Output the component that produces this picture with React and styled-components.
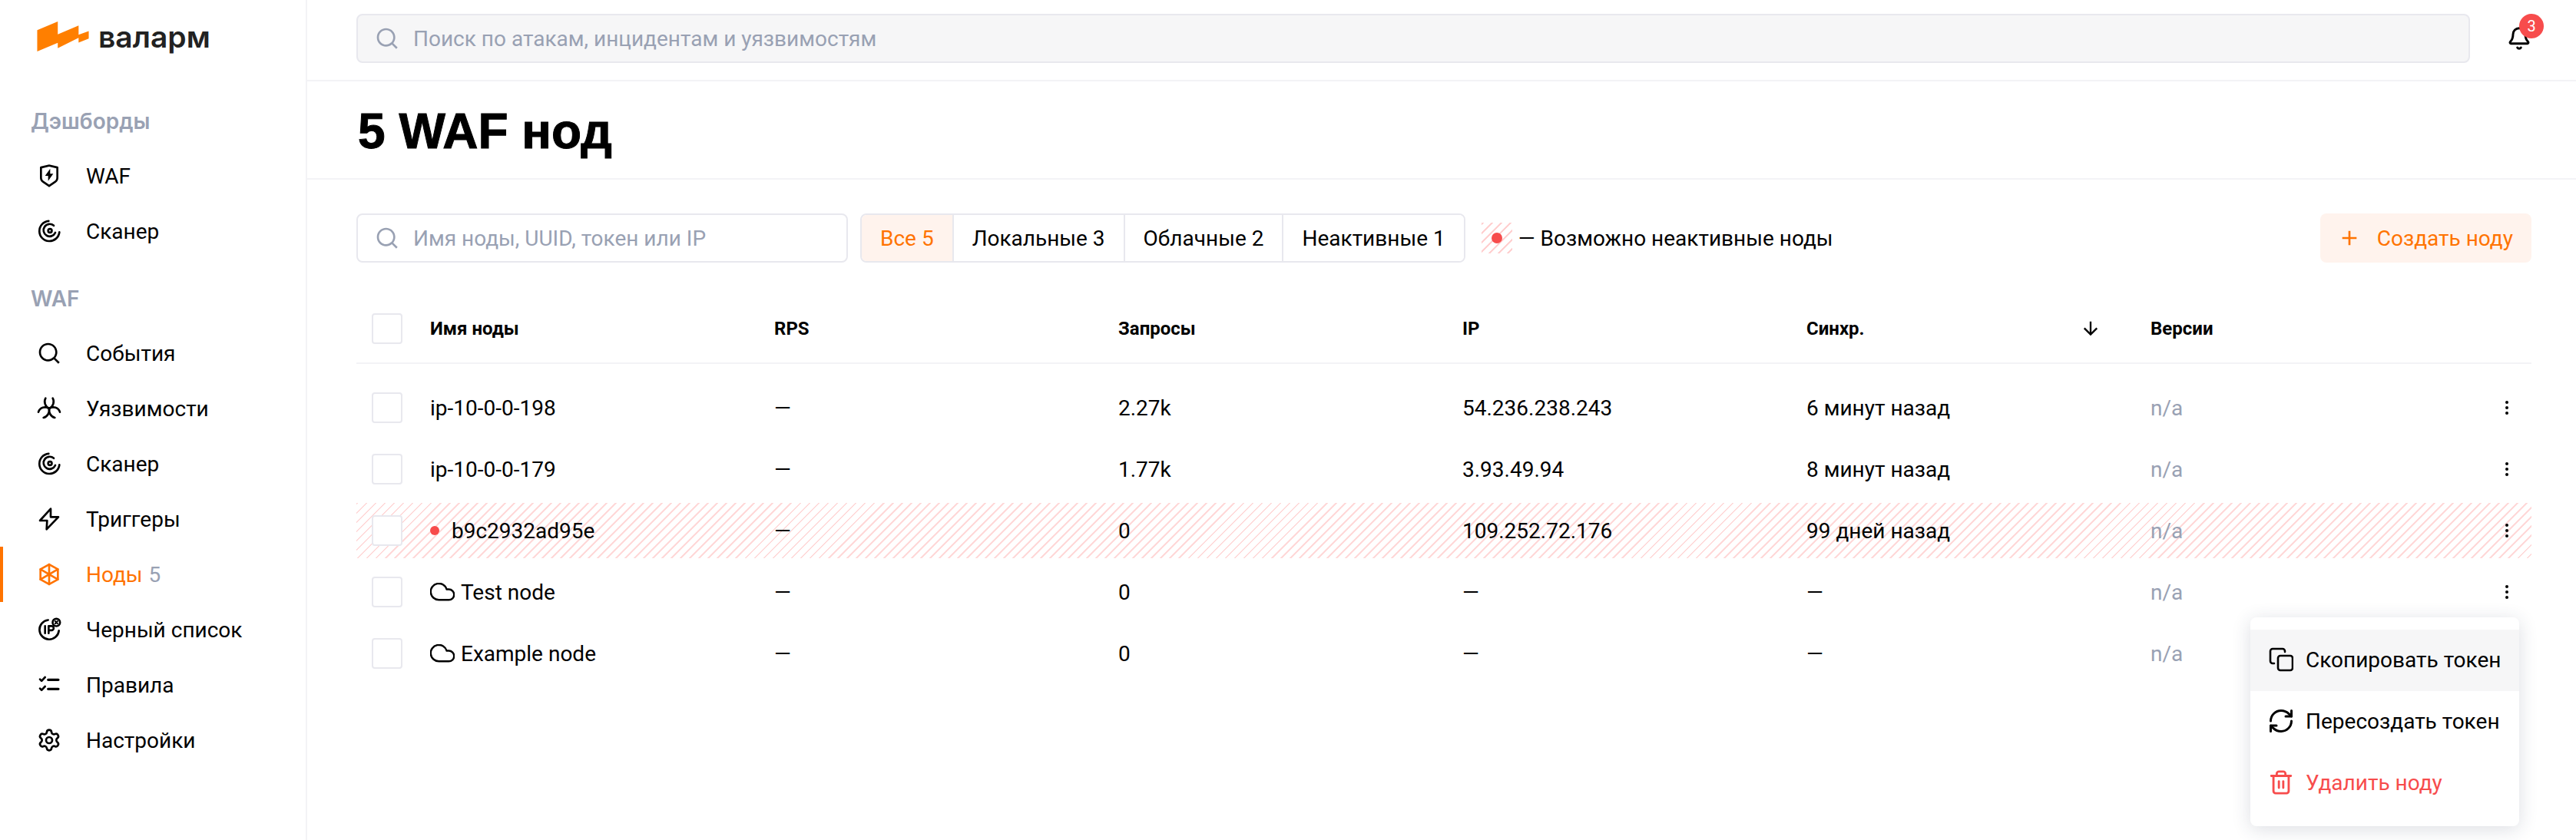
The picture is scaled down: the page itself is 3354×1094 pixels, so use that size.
import React from 'react'
import styled, { createGlobalStyle } from 'styled-components'
import { RiSearchLine, RiShieldFlashLine, RiAddLine, RiArrowDownLine } from 'react-icons/ri'
import { Settings, Bell, RefreshCw, Trash2 } from 'lucide-react'

const orange = '#ff7300'
const grey = '#99a1b3'
const line = '#e8e8ee'
const hatch = 'repeating-linear-gradient(135deg, #ffd9d9 0 2px, #fff 2px 8.5px)'

const GlobalStyle = createGlobalStyle`
  html, body {
    margin: 0;
    padding: 0;
    background: #fff;
    color: #000;
    font-family: 'Roboto', 'Liberation Sans', sans-serif;
    font-size: 28px;
  }
  * { box-sizing: border-box; }
`

const Page = styled.div`
  display: flex;
  width: 3354px;
  height: 1094px;
  overflow: hidden;
`

const Sidebar = styled.aside`
  flex: 0 0 400px;
  border-right: 2px solid #f3f3f6;
`

const LogoBox = styled.div`
  display: flex;
  align-items: center;
  gap: 12px;
  height: 106px;
  padding: 0 0 12px 48px;
`

const LogoText = styled.span`
  font-family: 'Inter', sans-serif;
  font-weight: 600;
  font-size: 39px;
  line-height: 1;
  color: #222;
`

const Section = styled.div`
  margin-top: 32px;
`

const SectionLabel = styled.div`
  height: 40px;
  margin-bottom: 15px;
  padding-left: 40px;
  font-family: 'Inter', sans-serif;
  font-weight: 600;
  font-size: 28px;
  line-height: 40px;
  color: ${grey};
`

const NavItem = styled.div`
  display: flex;
  align-items: center;
  gap: 32px;
  height: 72px;
  padding-left: ${p => (p.$active ? 44 : 48)}px;
  border-left: ${p => (p.$active ? `4px solid ${orange}` : 'none')};
  color: ${p => (p.$active ? orange : '#000')};
  svg { flex: 0 0 32px; }
`

const NavCount = styled.span`
  margin-left: 8px;
  color: ${grey};
`

const Main = styled.main`
  flex: 1;
  min-width: 0;
`

const TopBar = styled.header`
  display: flex;
  align-items: flex-start;
  height: 106px;
  padding: 18px 0 0 64px;
  border-bottom: 2px solid #f3f3f6;
`

const SearchBox = styled.div`
  display: flex;
  align-items: center;
  gap: 18px;
  flex: ${p => (p.$top ? '1' : '0 0 640px')};
  height: 64px;
  padding-left: 22px;
  border: 2px solid ${line};
  border-radius: 8px;
  background: ${p => (p.$top ? '#f6f6f7' : '#fff')};
  color: ${grey};
`

const BellBox = styled.div`
  position: relative;
  flex: 0 0 138px;
  display: flex;
  justify-content: center;
  padding: 16px 10px 0 0;
`

const Badge = styled.span`
  position: absolute;
  top: 0;
  left: 64px;
  width: 32px;
  height: 32px;
  border-radius: 50%;
  background: #f74c4c;
  color: #fff;
  font-size: 20px;
  line-height: 32px;
  text-align: center;
`

const TitleBar = styled.div`
  display: flex;
  align-items: center;
  height: 128px;
  padding: 4px 0 0 66px;
  border-bottom: 2px solid #f3f3f6;
`

const Title = styled.h1`
  margin: 0;
  font-family: 'Liberation Sans', sans-serif;
  font-weight: 700;
  font-size: 64px;
  line-height: 1;
  -webkit-text-stroke: 1px #000;
`

const Content = styled.div`
  padding: 44px 58px 0 64px;
`

const FilterBar = styled.div`
  display: flex;
  align-items: center;
  height: 64px;
`

const Tabs = styled.div`
  display: flex;
  height: 64px;
  margin-left: 16px;
  border: 2px solid ${line};
  border-radius: 8px;
  overflow: hidden;
`

const Tab = styled.div`
  display: flex;
  align-items: center;
  padding: 0 24px;
  border-left: ${p => (p.$first ? 'none' : `2px solid ${line}`)};
  background: ${p => (p.$active ? '#fff3ed' : '#fff')};
  color: ${p => (p.$active ? orange : '#000')};
`

const Legend = styled.div`
  display: flex;
  align-items: center;
  gap: 8px;
  margin-left: 21px;
`

const LegendMark = styled.span`
  display: flex;
  align-items: center;
  justify-content: center;
  width: 40px;
  height: 40px;
  background: repeating-linear-gradient(135deg, #ffd0d0 0 2.5px, #fff 2.5px 8.5px);
`

const RedDot = styled.span`
  flex: 0 0 ${p => p.$size || 12}px;
  width: ${p => p.$size || 12}px;
  height: ${p => p.$size || 12}px;
  border-radius: 50%;
  background: #f74c4c;
`

const CreateButton = styled.div`
  display: flex;
  align-items: center;
  gap: 20px;
  height: 64px;
  margin-left: auto;
  padding: 0 24px 0 22px;
  border-radius: 8px;
  background: #fff3ed;
  color: ${orange};
`

const Grid = styled.div`
  display: grid;
  grid-template-columns: 96px repeat(6, 448px) 32px;
  align-items: center;
  padding-right: 16px;
`

const HeadRow = styled(Grid)`
  height: 90px;
  margin-top: 42px;
  margin-bottom: 21px;
  border-bottom: 2px solid #f3f3f6;
  font-weight: 700;
  font-size: 24px;
`

const SortCell = styled.div`
  display: flex;
  align-items: center;
  justify-content: space-between;
  padding-right: 64px;
`

const Row = styled(Grid)`
  height: 72px;
  margin-bottom: 8px;
  background: ${p => (p.$warn ? hatch : 'transparent')};
`

const Check = styled.div`
  width: 40px;
  height: 40px;
  margin-left: 20px;
  border: 2px solid ${line};
  border-radius: 4px;
  background: #fff;
`

const NameCell = styled.div`
  display: flex;
  align-items: center;
  gap: ${p => (p.$dot ? 16 : 8)}px;
`

const Muted = styled.div`
  color: ${grey};
`

const KebabCell = styled.div`
  position: relative;
  display: flex;
  justify-content: center;
`

const Menu = styled.div`
  position: absolute;
  z-index: 2;
  top: 45px;
  right: 0;
  width: 350px;
  padding: 16px 0;
  border-radius: 8px;
  background: #fff;
  box-shadow: 0 4px 24px rgba(40, 50, 80, 0.16);
`

const MenuItem = styled.div`
  display: flex;
  align-items: center;
  gap: 16px;
  height: 80px;
  padding: 0 0 2px 24px;
  background: ${p => (p.$hover ? '#f6f6f7' : '#fff')};
  color: ${p => (p.$danger ? '#f74c4c' : '#000')};
  white-space: nowrap;
`

const WideIcon = styled.span`
  display: flex;
  justify-content: center;
  width: 32px;
  svg { flex: none; }
`

const LogoMark = () => (
  <svg width="68" height="39" viewBox="55 46 203 118">
    <polygon fill="#ff7f00" points="55,80 136,46 136,97 218,62 218,98 258,84 258,113 218,129 218,110 136,151 136,130 55,164" />
  </svg>
)

const Icon = ({ children, ...rest }) => (
  <svg width="32" height="32" viewBox="0 0 24 24" fill="none" stroke="currentColor" strokeWidth="2" strokeLinecap="round" strokeLinejoin="round" {...rest}>
    {children}
  </svg>
)

const ScanIcon = () => (
  <Icon>
    <path d="M11.5 2.2A9.8 9.8 0 1 0 22 13" />
    <path d="M16.5 6.6A6 6 0 1 0 18 13.5" />
    <circle cx="12.8" cy="11.6" r="1.8" />
  </Icon>
)

const HazardIcon = () => (
  <Icon>
    <path d="M8.5 2C6.5 5.5 8 10 12 12c4-2 5.5-6.5 3.5-10" />
    <path d="M1.5 15.5C3 11 8 9.5 12 12c.5 4-1.5 8-5.5 9" />
    <path d="M22.5 15.5C21 11 16 9.5 12 12c-.5 4 1.5 8 5.5 9" />
  </Icon>
)

const BoltIcon = () => (
  <Icon>
    <path d="M13.5 2 3 13.5h7L9.5 22 21 10h-7.5l0-8z" />
  </Icon>
)

const NodeIcon = () => (
  <Icon>
    <path d="M12 2.3 20.5 7v10L12 21.7 3.5 17V7z" />
    <path d="M12 2.3v19.4M3.5 7l17 10M20.5 7l-17 10" />
  </Icon>
)

const BlockIcon = () => (
  <Icon>
    <path d="M21.5 13A9.5 9.5 0 1 1 11 2.6" />
    <path d="M8 8.5v7M11.5 15.5v-7h2.8a2 2 0 0 1 0 4.2h-2.8" />
    <circle cx="19" cy="5" r="3.6" />
    <path d="m17.8 3.8 2.4 2.4M20.2 3.8l-2.4 2.4" strokeWidth="1.5" />
  </Icon>
)

const RulesIcon = () => (
  <Icon>
    <path d="m3 6.5 1.6 1.6L8 4.5M3 15.5l1.6 1.6L8 13.5" />
    <path d="M11 7h10M11 16h10" strokeWidth="2.4" />
  </Icon>
)

const CloudIcon = () => (
  <svg width="32" height="24" viewBox="1.5 4.5 21 15.5" fill="none" stroke="currentColor" strokeWidth="1.6" strokeLinejoin="round">
    <path d="M17.5 19H9a7 7 0 1 1 6.71-9h1.79a4.5 4.5 0 1 1 0 9Z" />
  </svg>
)

const CopyIcon = () => (
  <svg width="32" height="32" viewBox="0 0 32 32" fill="none" stroke="currentColor" strokeWidth="2.6" strokeLinecap="round" strokeLinejoin="round">
    <rect x="12" y="11" width="19" height="19" rx="3" />
    <path d="M21 6V5a3 3 0 0 0-3-3H5a3 3 0 0 0-3 3v13a3 3 0 0 0 3 3h2" />
  </svg>
)

const Kebab = () => (
  <svg width="24" height="24" viewBox="0 0 24 24" fill="#000">
    <circle cx="12" cy="5" r="2" />
    <circle cx="12" cy="12" r="2" />
    <circle cx="12" cy="19" r="2" />
  </svg>
)

const rows = [
  { name: 'ip-10-0-0-198', req: '2.27k', ip: '54.236.238.243', sync: '6 минут назад' },
  { name: 'ip-10-0-0-179', req: '1.77k', ip: '3.93.49.94', sync: '8 минут назад' },
  { name: 'b9c2932ad95e', req: '0', ip: '109.252.72.176', sync: '99 дней назад', warn: true },
  { name: 'Test node', req: '0', ip: '—', sync: '—', cloud: true, menu: true },
  { name: 'Example node', req: '0', ip: '—', sync: '—', cloud: true },
]

export default function App() {
  return (
    <Page>
      <GlobalStyle />
      <Sidebar>
        <LogoBox>
          <LogoMark />
          <LogoText>валарм</LogoText>
        </LogoBox>
        <Section>
          <SectionLabel>Дэшборды</SectionLabel>
          <NavItem><RiShieldFlashLine size={32} />WAF</NavItem>
          <NavItem><ScanIcon />Сканер</NavItem>
        </Section>
        <Section>
          <SectionLabel>WAF</SectionLabel>
          <NavItem><RiSearchLine size={32} />События</NavItem>
          <NavItem><HazardIcon />Уязвимости</NavItem>
          <NavItem><ScanIcon />Сканер</NavItem>
          <NavItem><BoltIcon />Триггеры</NavItem>
          <NavItem $active><NodeIcon /><span>Ноды<NavCount>5</NavCount></span></NavItem>
          <NavItem><BlockIcon />Черный список</NavItem>
          <NavItem><RulesIcon />Правила</NavItem>
          <NavItem><Settings size={32} />Настройки</NavItem>
        </Section>
      </Sidebar>
      <Main>
        <TopBar>
          <SearchBox $top><RiSearchLine size={32} />Поиск по атакам, инцидентам и уязвимостям</SearchBox>
          <BellBox>
            <Bell size={32} strokeWidth={2.2} />
            <Badge>3</Badge>
          </BellBox>
        </TopBar>
        <TitleBar>
          <Title>5 WAF нод</Title>
        </TitleBar>
        <Content>
          <FilterBar>
            <SearchBox><RiSearchLine size={32} />Имя ноды, UUID, токен или IP</SearchBox>
            <Tabs>
              <Tab $first $active>Все 5</Tab>
              <Tab>Локальные 3</Tab>
              <Tab>Облачные 2</Tab>
              <Tab>Неактивные 1</Tab>
            </Tabs>
            <Legend>
              <LegendMark><RedDot $size={14} /></LegendMark>
              — Возможно неактивные ноды
            </Legend>
            <CreateButton><RiAddLine size={32} />Создать ноду</CreateButton>
          </FilterBar>
          <HeadRow>
            <Check />
            <div>Имя ноды</div>
            <div>RPS</div>
            <div>Запросы</div>
            <div>IP</div>
            <SortCell>Синхр.<RiArrowDownLine size={28} /></SortCell>
            <div>Версии</div>
            <div />
          </HeadRow>
          {rows.map(r => (
            <Row key={r.name} $warn={r.warn}>
              <Check />
              <NameCell $dot={r.warn}>
                {r.warn && <RedDot />}
                {r.cloud && <CloudIcon />}
                {r.name}
              </NameCell>
              <div>—</div>
              <div>{r.req}</div>
              <div>{r.ip}</div>
              <div>{r.sync}</div>
              <Muted>n/a</Muted>
              <KebabCell>
                <Kebab />
                {r.menu && (
                  <Menu>
                    <MenuItem $hover><CopyIcon />Скопировать токен</MenuItem>
                    <MenuItem><WideIcon><RefreshCw size={36} strokeWidth={2} /></WideIcon>Пересоздать токен</MenuItem>
                    <MenuItem $danger><WideIcon><Trash2 size={34} strokeWidth={2} /></WideIcon>Удалить ноду</MenuItem>
                  </Menu>
                )}
              </KebabCell>
            </Row>
          ))}
        </Content>
      </Main>
    </Page>
  )
}
